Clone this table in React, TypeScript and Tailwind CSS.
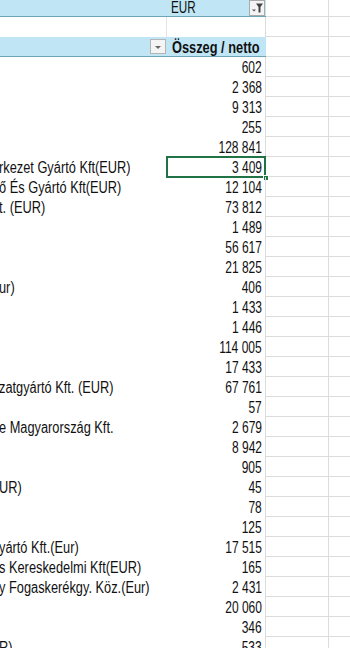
import React from "react";

const rows: [string, string][] = [
  ["", "602"],
  ["", "2 368"],
  ["", "9 313"],
  ["", "255"],
  ["", "128 841"],
  ["rkezet Gyártó Kft(EUR)", "3 409"],
  ["ő És Gyártó Kft(EUR)", "12 104"],
  ["t. (EUR)", "73 812"],
  ["", "1 489"],
  ["", "56 617"],
  ["", "21 825"],
  ["ur)", "406"],
  ["", "1 433"],
  ["", "1 446"],
  ["", "114 005"],
  ["", "17 433"],
  ["zatgyártó Kft. (EUR)", "67 761"],
  ["", "57"],
  ["e Magyarország Kft.", "2 679"],
  ["", "8 942"],
  ["", "905"],
  ["UR)", "45"],
  ["", "78"],
  ["", "125"],
  ["yártó Kft.(Eur)", "17 515"],
  ["s Kereskedelmi Kft(EUR)", "165"],
  ["y Fogaskerékgy. Köz.(Eur)", "2 431"],
  ["", "20 060"],
  ["", "346"],
  ["R)", "533"],
];

const font = {
  fontFamily: '"Liberation Sans", Arial, sans-serif',
};

function FilterIcon() {
  return (
    <svg width="14" height="14" viewBox="0 0 14 14">
      <path d="M2 8.5 L6 8.5 L4 10.5 Z" fill="#555" />
      <path d="M6 2.5 L13 2.5 L10.5 6 L10.5 11.5 L8.5 11.5 L8.5 6 Z" fill="#444" />
    </svg>
  );
}

function DropIcon() {
  return (
    <svg width="14" height="14" viewBox="0 0 14 14">
      <path d="M4 6 L10 6 L7 9 Z" fill="#666" />
    </svg>
  );
}

export default function App() {
  return (
    <div
      className="relative w-[350px] h-[648px] overflow-hidden bg-white text-[16px] text-[#111] leading-none"
      style={font}
    >
      <div className="flex flex-col -mt-[3px]">
        {/* Row 1 */}
        <div className="flex h-[20px]">
          <div className="w-[167px] shrink-0 bg-[#c0e6f5] border-b border-[#6aa6b8]" />
          <div className="w-[99px] shrink-0 bg-[#c0e6f5] border-b border-[#6aa6b8] flex items-end pl-[4px] relative whitespace-nowrap">
            <span className="inline-block origin-left scale-x-[0.73]">EUR</span>
            <div className="absolute right-[1px] top-[3px] w-[16px] h-[16px] bg-[#f4f4f4] border border-[#a9a9a9] flex items-center justify-center">
              <FilterIcon />
            </div>
          </div>
          <div className="w-[63px] shrink-0 border-b border-r border-[#dcdcdc]" />
          <div className="flex-1 border-b border-[#dcdcdc]" />
        </div>
        {/* Row 2 */}
        <div className="flex h-[20px]">
          <div className="w-[167px] shrink-0 border-r border-[#e4e4e4]" />
          <div className="w-[99px] shrink-0 border-r border-[#dcdcdc]" />
          <div className="w-[63px] shrink-0 border-b border-r border-[#dcdcdc]" />
          <div className="flex-1 border-b border-[#dcdcdc]" />
        </div>
        {/* Row 3 */}
        <div className="flex h-[20px]">
          <div className="w-[167px] shrink-0 bg-[#c0e6f5] border-b border-[#6aa6b8] flex items-center justify-end pr-px">
            <div className="w-[16px] h-[15px] bg-[#f4f4f4] border border-[#b5b5b5] flex items-center justify-center">
              <DropIcon />
            </div>
          </div>
          <div className="w-[99px] shrink-0 bg-[#c0e6f5] border-b border-[#6aa6b8] flex items-end pl-[5px] font-bold whitespace-nowrap overflow-visible">
            <span className="inline-block origin-left scale-x-[0.8]">Összeg / netto</span>
          </div>
          <div className="w-[63px] shrink-0 border-b border-r border-[#dcdcdc]" />
          <div className="flex-1 border-b border-[#dcdcdc]" />
        </div>
        {rows.map(([label, value], i) => (
          <div key={i} className="flex h-[20px]">
            <div className="w-[167px] shrink-0 flex items-end pb-px whitespace-nowrap overflow-visible">
              <span className="inline-block -ml-[1px] origin-left scale-x-[0.8]">{label}</span>
            </div>
            <div className="w-[99px] shrink-0 relative flex items-end justify-end pr-[3px] pb-px border-r border-[#dcdcdc] whitespace-nowrap">
              <span className="inline-block origin-right scale-x-[0.75]">{value}</span>
              {i === 5 && (
                <>
                  <div className="absolute -left-[1px] -top-[1px] -right-[1px] -bottom-[1px] border-2 border-[#217346]" />
                  <div className="absolute -right-[4px] -bottom-[4px] w-[6px] h-[6px] bg-[#217346] border border-white" />
                </>
              )}
            </div>
            <div className="w-[63px] shrink-0 border-b border-r border-[#dcdcdc]" />
            <div className="flex-1 border-b border-[#dcdcdc]" />
          </div>
        ))}
      </div>
    </div>
  );
}
